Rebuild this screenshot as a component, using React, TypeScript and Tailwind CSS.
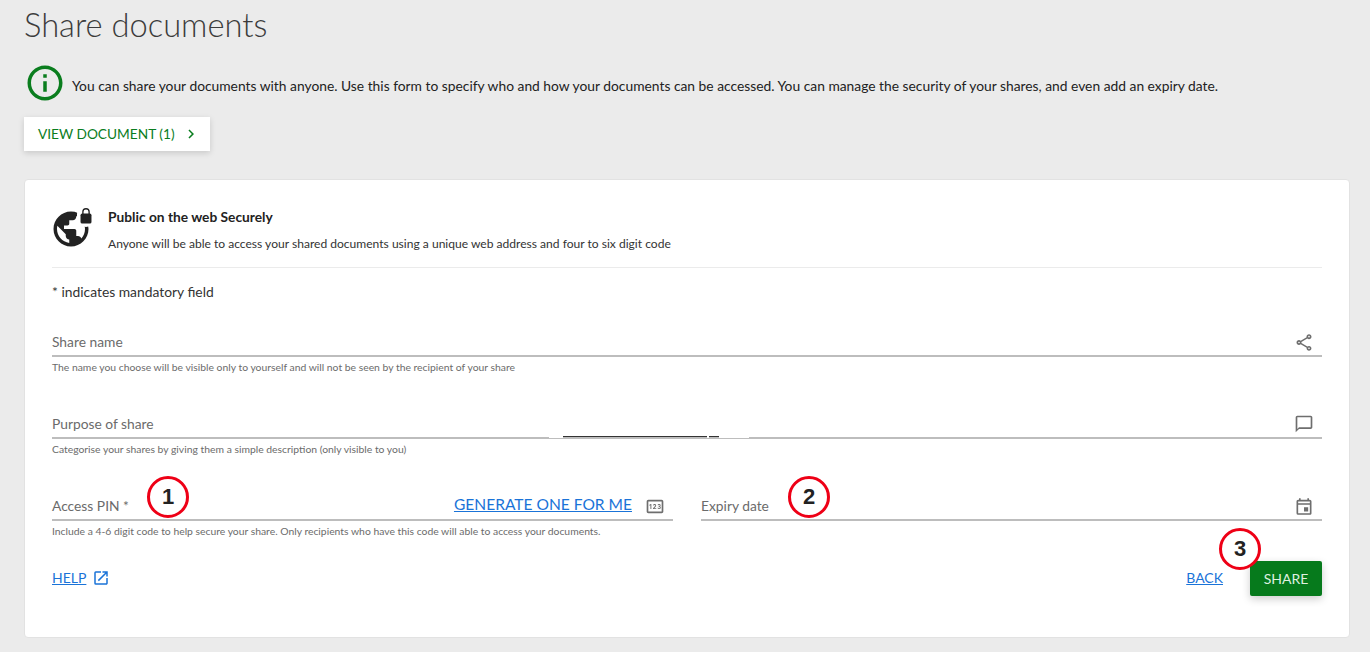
import React from "react";
import { MdOutlineShare, MdOutlineChatBubbleOutline, MdOutlineEvent, MdOutlineOpenInNew, MdOutlineChevronRight, MdOutlineInfo, MdPublic, MdOutlinePin } from "react-icons/md";

function Marker({ n, className }: { n: number; className: string }) {
  return (
    <div className={"absolute w-[42px] h-[42px] rounded-full border-[3px] border-[#ee0016] bg-white flex items-center justify-center pb-[2px] text-[22px] font-bold text-[#222] font-['Liberation_Sans',sans-serif] " + className}>
      {n}
    </div>
  );
}

function Field({ label, help, icon, className, children }: any) {
  return (
    <div className={className}>
      <div className="h-[36px] border-b-2 border-[#bdbdbd] flex items-end justify-between pb-[3px]">
        <span className="text-[13.8px] leading-[20px] text-[#6b6b6b]">{label}</span>
        <div className="flex items-end">
          {children}
          <span className="text-[#6e6e6e] w-[20px] h-[20px] mr-[8px] flex items-center justify-center">{icon}</span>
        </div>
      </div>
      <p className="mt-[3px] h-[14px] text-[10.36px] leading-[14px] text-[#6b6b6b]">{help}</p>
    </div>
  );
}

export default function App() {
  return (
    <div className="h-[652px] overflow-hidden bg-[#ebebeb] px-[24px] font-['Lato',sans-serif]">
      <h1 className="text-[32.7px] leading-[50px] font-light text-[#3c3c3c]">Share documents</h1>
      <div className="mt-[16px] h-[34px] flex items-center">
        <MdOutlineInfo size={42} className="text-[#0a7d1e] shrink-0" />
        <p className="ml-[6px] mt-[6px] text-[13.82px] leading-[20px] text-[#222]">
          You can share your documents with anyone. Use this form to specify who and how your documents can be accessed. You can manage the security of your shares, and even add an expiry date.
        </p>
      </div>
      <button className="mt-[17px] w-[186px] h-[34px] bg-white shadow-[0_2px_6px_rgba(0,0,0,0.15)] flex items-center pl-[14px] text-[13.7px] text-[#0a7d1e]">
        VIEW DOCUMENT (1)
        <MdOutlineChevronRight size={18} className="ml-[7px]" />
      </button>
      <div className="relative mt-[28px] h-[459px] w-[1326px] bg-white rounded-[4px] border border-[#e2e2e2] px-[27px]">
        <div className="h-[88px] border-b border-[#ebebeb] flex items-start pt-[27px]">
          <div className="relative w-[56px] h-[44px] shrink-0">
            <MdPublic size={42} className="absolute -left-[2px] top-[1px] text-[#222]" />
            <div className="absolute left-[25px] -top-[2px] w-[18px] h-[22px] bg-white rounded-full" />
            <svg viewBox="0 0 14 19" className="absolute left-[28px] top-[1px] w-[12px] h-[16px]" fill="#222">
              <path d="M2.5 7V4.6a4.5 4.5 0 0 1 9 0V7h-1.6V4.6a2.9 2.9 0 0 0-5.8 0V7z" />
              <rect x="0.5" y="6.5" width="13" height="12" rx="2" />
            </svg>
          </div>
          <div>
            <p className="text-[13.75px] leading-[20px] font-bold text-[#222]">Public on the web Securely</p>
            <p className="mt-[8px] text-[12.07px] leading-[18px] text-[#333]">Anyone will be able to access your shared documents using a unique web address and four to six digit code</p>
          </div>
        </div>
        <p className="mt-[14px] text-[13.85px] leading-[20px] text-[#333]">* indicates mandatory field</p>
        <Field className="mt-[19px]" label="Share name" help="The name you choose will be visible only to yourself and will not be seen by the recipient of your share" icon={<MdOutlineShare size={21} />} />
        <Field className="mt-[29px]" label="Purpose of share" help="Categorise your shares by giving them a simple description (only visible to you)" icon={<MdOutlineChatBubbleOutline size={20} />} />
        <div className="absolute left-[524px] top-[256px] flex h-[2px]">
          <div className="w-[14px] bg-white" />
          <div className="w-[144px] h-[1px] bg-[#333]" />
          <div className="w-[2px] bg-white" />
          <div className="w-[10px] h-[1px] bg-[#333]" />
          <div className="w-[30px] bg-white" />
        </div>
        <div className="mt-[29px] flex gap-[28px]">
          <Field
            className="w-[621px]"
            label="Access PIN *"
            help="Include a 4-6 digit code to help secure your share. Only recipients who have this code will able to access your documents."
            icon={<MdOutlinePin size={21} />}
          >
            <a className="mr-[13px] text-[15.56px] leading-[20px] text-[#1a73d8] underline relative -top-[2px]">GENERATE ONE FOR ME</a>
          </Field>
          <Field className="w-[621px]" label="Expiry date" help="" icon={<MdOutlineEvent size={21} />} />
        </div>
        <div className="mt-[23px] flex items-center justify-between">
          <a className="flex items-center text-[14px] leading-[20px] text-[#1a73d8] -mt-[2px]">
            <span className="underline">HELP</span>
            <MdOutlineOpenInNew size={18} className="ml-[6px]" />
          </a>
          <div className="flex items-center">
            <a className="text-[14px] text-[#1a73d8] underline -mt-[2px]">BACK</a>
            <button className="ml-[27px] w-[72px] h-[35px] bg-[#067a1c] rounded-[2px] text-[14px] text-[#dff0e0] shadow-[0_3px_8px_rgba(0,0,0,0.2)]">SHARE</button>
          </div>
        </div>
        <Marker n={1} className="left-[122px] top-[296px]" />
        <Marker n={2} className="left-[763px] top-[296px]" />
        <Marker n={3} className="left-[1194px] top-[348px]" />
      </div>
    </div>
  );
}
